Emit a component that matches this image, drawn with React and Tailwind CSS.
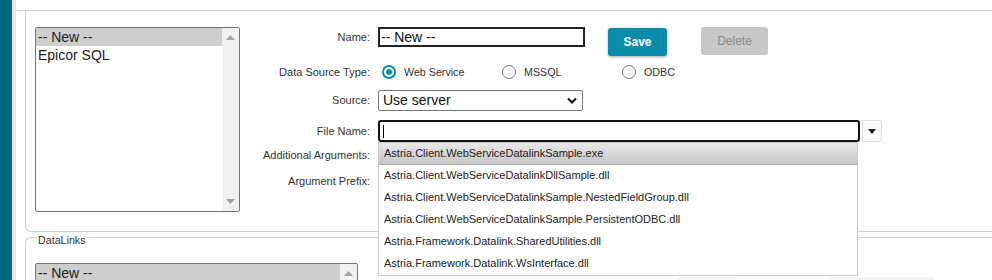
import React from 'react';

const files = [
  'Astria.Client.WebServiceDatalinkSample.exe',
  'Astria.Client.WebServiceDatalinkDllSample.dll',
  'Astria.Client.WebServiceDatalinkSample.NestedFieldGroup.dll',
  'Astria.Client.WebServiceDatalinkSample.PersistentODBC.dll',
  'Astria.Framework.Datalink.SharedUtilities.dll',
  'Astria.Framework.Datalink.WsInterface.dll',
];

const Label = ({ children, className = '' }) => (
  <div className={`w-[130px] shrink-0 text-right text-[11px] text-[#333] ${className}`}>{children}</div>
);

const Radio = ({ checked, label }) => (
  <div className="flex w-[120px] items-center">
    {checked ? (
      <span className="flex h-[14px] w-[14px] items-center justify-center rounded-full border-2 border-[#0b8cab]">
        <span className="h-[6px] w-[6px] rounded-full bg-[#0b8cab]" />
      </span>
    ) : (
      <span className="h-[14px] w-[14px] rounded-full border-[1.5px] border-[#7a7a7a]" />
    )}
    <span className="ml-[8px] text-[10.7px] text-[#333]">{label}</span>
  </div>
);

// scrollbar arrows for the list boxes
const ScrollArrow = ({ down }) => (
  <svg width="9" height="5" viewBox="0 0 9 5">
    <path d={down ? 'M0 0 L9 0 L4.5 5 Z' : 'M0 5 L9 5 L4.5 0 Z'} fill="#a3a3a3" />
  </svg>
);

const ListBox = ({ items, className = '' }) => (
  <div className={`flex shrink-0 overflow-hidden rounded-[2px] border border-[#767676] bg-white ${className}`}>
    <div className="flex-1 text-[14px] leading-[18px] text-[#222]">
      {items.map((item, i) => (
        <div key={item} className={`pl-[2px] ${i === 0 ? 'bg-[#cecece]' : ''}`}>
          {item}
        </div>
      ))}
    </div>
    <div className="flex w-[17px] flex-col items-center justify-between bg-[#f1f1f1] py-[7px]">
      <ScrollArrow />
      <ScrollArrow down />
    </div>
  </div>
);

export default function App() {
  return (
    <div className="flex h-[280px] w-[992px] overflow-hidden bg-white font-['Liberation_Sans',Arial,sans-serif]">
      <div className="w-[12px] shrink-0 bg-[#006a82]" />
      <div className="w-[4px] shrink-0 bg-[#e8e8e8]" />
      <div className="min-w-0 flex-1">
        <div className="h-[10px]" />
        <div className="ml-[1px] border-t border-[#cccccc]" />

        {/* Data source fieldset */}
        <div className="ml-[9px] flex h-[221px] rounded-bl-[6px] border-b border-l border-[#d0d0d0] pl-[9px] pt-[16px]">
          <ListBox items={['-- New --', 'Epicor SQL']} className="h-[185px] w-[205px]" />

          <div className="flex flex-col">
            <div className="flex h-[36px] items-start">
              <Label className="leading-[20px]">Name:</Label>
              <div className="ml-[8px] flex h-[20px] w-[207px] items-center border-2 border-[#222] pl-[1px] text-[14px] text-[#111]">
                -- New --
              </div>
              <button className="ml-[23px] mt-[1px] h-[28px] w-[59px] rounded-[3px] bg-[#0b8cab] text-[12px] font-bold text-white shadow-[0_1px_3px_rgba(0,0,0,0.35)]">
                Save
              </button>
              <button className="ml-[34px] h-[28px] w-[67px] rounded-[3px] bg-[#c8c8c8] text-[12px] text-[#8a8a8a]">
                Delete
              </button>
            </div>

            <div className="flex h-[18px] items-center">
              <Label>Data Source Type:</Label>
              <div className="ml-[12px] flex">
                <Radio checked label="Web Service" />
                <Radio label="MSSQL" />
                <Radio label="ODBC" />
              </div>
            </div>

            <div className="mt-[9px] flex h-[20px] items-center">
              <Label>Source:</Label>
              <div className="ml-[8px] flex h-[21px] w-[205px] items-center justify-between rounded-[2px] border border-[#767676] pl-[4px] pr-[5px] text-[14px] text-[#111]">
                Use server
                <svg width="10" height="7" viewBox="0 0 10 7">
                  <path d="M1 1.5 L5 5.5 L9 1.5" fill="none" stroke="#111" strokeWidth="2" />
                </svg>
              </div>
            </div>

            <div className="relative mt-[10px] flex h-[22px] items-center">
              <Label>File Name:</Label>
              <div className="ml-[8px] flex h-[22px] w-[482px] items-center rounded-[3px] border-2 border-[#111] pl-[3px]">
                <span className="h-[13px] w-px bg-black" />
              </div>
              <div className="ml-[2px] flex h-[22px] w-[20px] items-center justify-center rounded-r-[3px] border border-[#dddddd] bg-[#fafafa]">
                <svg width="8" height="5" viewBox="0 0 8 5">
                  <path d="M0 0 L8 0 L4 5 Z" fill="#222" />
                </svg>
              </div>

              {/* autocomplete list */}
              <div className="absolute left-[138px] top-[22px] z-10 w-[480px] border border-[#cccccc] bg-white text-[11px] leading-[13px] text-[#222]">
                {files.map((f, i) => (
                  <div
                    key={f}
                    className={`flex h-[22px] items-center pb-[1px] pl-[5px] ${
                      i === 0 ? 'border-b border-[#a8a8a8] bg-gradient-to-b from-[#e8e8e8] to-[#c6c6c6]' : ''
                    }`}
                  >
                    {f}
                  </div>
                ))}
              </div>
            </div>

            <div className="mt-[4px] flex h-[18px] items-center">
              <Label>Additional Arguments:</Label>
            </div>
            <div className="mt-[8px] flex h-[18px] items-center">
              <Label>Argument Prefix:</Label>
            </div>
          </div>
        </div>

        {/* DataLinks fieldset */}
        <div className="ml-[9px] mt-[5px] rounded-tl-[6px] border-l border-t border-[#d0d0d0] pl-[9px]">
          <div className="-mt-[4px] ml-[2px] w-fit bg-white px-[1px] text-[10.7px] leading-[13px] text-[#333]">
            DataLinks
          </div>
          <div className="mt-[16px] flex items-start">
            <ListBox items={['-- New --', 'Epicor SQL']} className="h-[185px] w-[323px]" />
            <div className="ml-[319px] mt-[14px] h-[8px] w-[60px] rounded-[3px] bg-[#f4f4f4]" />
            <div className="ml-[93px] mt-[14px] h-[8px] w-[105px] rounded-[3px] bg-[#f4f4f4]" />
          </div>
        </div>
      </div>
    </div>
  );
}
